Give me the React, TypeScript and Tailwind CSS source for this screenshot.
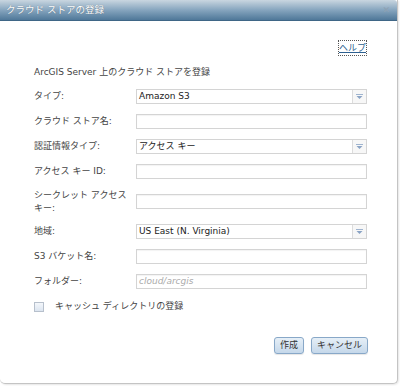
const FONT = "font-[family-name:'DejaVu_Sans','Noto_Sans_CJK_JP',sans-serif]";

const DropArrow = () => (
  <div className="w-[14px] h-full border-l border-[#dcdcdc] bg-[#f7f7f7] flex items-center justify-center">
    <svg width="7" height="5" viewBox="0 0 7 5">
      <rect x="0" y="0" width="7" height="1" fill="#9fb4cf" />
      <path d="M0.5 2 L6.5 2 L3.5 5 Z" fill="#8aa3c4" />
    </svg>
  </div>
);

const TextBox = ({ value, placeholder }: { value?: string; placeholder?: string }) => (
  <div className="w-[231px] h-[15px] border border-[#d4d4d4] bg-white flex items-center px-[2px] shadow-[inset_0_1px_1px_rgba(0,0,0,0.05)]">
    {value && <span className="text-[#222]">{value}</span>}
    {placeholder && <span className="text-[#aaa] italic">{placeholder}</span>}
  </div>
);

const Select = ({ value }: { value: string }) => (
  <div className="w-[231px] h-[15px] border border-[#d4d4d4] bg-white flex items-stretch">
    <div className="flex-1 flex items-center px-[2px] text-[#222]">{value}</div>
    <DropArrow />
  </div>
);

const Row = ({
  label,
  tall,
  children,
}: {
  label: React.ReactNode;
  tall?: boolean;
  children: React.ReactNode;
}) => (
  <div className={tall ? "flex items-center h-[35px]" : "flex items-center h-[25px]"}>
    <div className="w-[102px] text-[#444] leading-[13px] whitespace-nowrap">{label}</div>
    {children}
  </div>
);

const Button = ({ children }: { children: React.ReactNode }) => (
  <button className="h-[17px] px-[5px] rounded-[3px] border border-[#88a8c8] bg-linear-to-b from-[#e6eff7] to-[#c5d8ea] text-[#333] leading-[15px] shadow-[0_1px_1px_rgba(0,0,0,0.1)]">
    {children}
  </button>
);

export default function App() {
  return (
    <div className={`w-[400px] h-[386px] bg-white text-[9px] ${FONT}`}>
      <div className="w-[398px] h-[384px] border-r border-b border-[#c4c4c4] rounded-b-[5px] bg-white flex flex-col shadow-[1px_1px_2px_rgba(0,0,0,0.1)]">
        <div className="h-[21px] shrink-0 rounded-tr-[3px] bg-linear-to-b from-[#c9d6e0] via-[#86a5be] to-[#4f7899] border-b border-[#3f6686] flex items-center justify-between pl-[6px] pr-[7px]">
          <span className="text-white text-[9.5px] [text-shadow:0_0_1px_rgba(0,0,0,0.4)]">クラウド ストアの登録</span>
          <span className="text-[#8ea1b2] text-[9px] leading-none">✕</span>
        </div>

        <div className="flex justify-end pr-[31px] mt-[20px] h-[14px]">
          <span className="text-[#2d5f8f] underline outline-1 outline-dotted outline-[#555] leading-[14px]">ヘルプ</span>
        </div>

        <div className="pl-[34px] mt-[10px] h-[14px] leading-[14px] text-[#444]">
          ArcGIS Server 上のクラウド ストアを登録
        </div>

        <div className="pl-[34px] mt-[5px] flex flex-col">
          <Row label="タイプ:">
            <Select value="Amazon S3" />
          </Row>
          <Row label="クラウド ストア名:">
            <TextBox />
          </Row>
          <Row label="認証情報タイプ:">
            <Select value="アクセス キー" />
          </Row>
          <Row label="アクセス キー ID:">
            <TextBox />
          </Row>
          <Row label={<>シークレット アクセス<br />キー:</>} tall>
            <TextBox />
          </Row>
          <Row label="地域:">
            <Select value="US East (N. Virginia)" />
          </Row>
          <Row label="S3 バケット名:">
            <TextBox />
          </Row>
          <Row label="フォルダー:">
            <TextBox placeholder="cloud/arcgis" />
          </Row>
          <div className="flex items-center h-[26px]">
            <div className="w-[10px] h-[10px] border border-[#b7c0cc] bg-linear-to-b from-[#f4f7fb] to-[#dce5f0]" />
            <span className="ml-[11px] text-[#444]">キャッシュ ディレクトリの登録</span>
          </div>
        </div>

        <div className="flex justify-end gap-[7px] pr-[29px] mt-[17px]">
          <Button>作成</Button>
          <Button>キャンセル</Button>
        </div>
      </div>
    </div>
  );
}
